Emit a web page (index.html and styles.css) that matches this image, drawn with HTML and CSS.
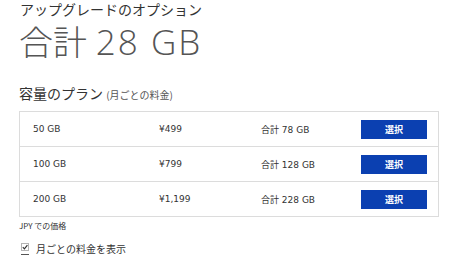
FILE: index.html
```html
<!DOCTYPE html>
<html lang="ja">
<head>
<meta charset="utf-8">
<link rel="stylesheet" href="styles.css">
</head>
<body>
<div class="page">
  <div class="title">アップグレードのオプション</div>
  <div class="total">合計 <span class="amount">28 GB</span></div>
  <div class="subtitle">容量のプラン <span class="note">(月ごとの料金)</span></div>
  <div class="plans">
    <div class="row">
      <span>50 GB</span><span>¥499</span><span>合計 78 GB</span><button class="btn">選択</button>
    </div>
    <div class="row">
      <span>100 GB</span><span>¥799</span><span>合計 128 GB</span><button class="btn">選択</button>
    </div>
    <div class="row">
      <span>200 GB</span><span>¥1,199</span><span>合計 228 GB</span><button class="btn">選択</button>
    </div>
  </div>
  <div class="currency">JPY での価格</div>
  <label class="check">
    <svg class="box" width="9" height="14" viewBox="0 0 9 14">
      <rect x="0.5" y="0.5" width="7" height="7" fill="#fff" stroke="#b5b5b5"/>
      <path d="M1.8 4.2 L3.4 5.8 L6.4 2.2" fill="none" stroke="#333" stroke-width="1.2"/>
      <line x1="0" y1="11.5" x2="8" y2="11.5" stroke="#555" stroke-width="1"/>
    </svg>
    <span>月ごとの料金を表示</span>
  </label>
</div>
</body>
</html>
```
FILE: styles.css
```css
html, body {
  margin: 0;
  padding: 0;
  background: #fff;
}
.page {
  padding-left: 19px;
  width: 420px;
  font-family: "Noto Sans CJK JP", sans-serif;
  color: #333;
}
.title {
  font-size: 14px;
  line-height: 18px;
  height: 18px;
  padding-left: 1px;
  color: #333;
}
.total {
  margin-top: 4px;
  font-family: "Open Sans", "Noto Sans CJK JP", sans-serif;
  font-weight: 300;
  font-size: 34px;
  line-height: 40px;
  height: 40px;
  color: #555;
  white-space: nowrap;
}
.amount {
  font-size: 35px;
  letter-spacing: 2px;
}
.subtitle {
  margin-top: 21px;
  font-size: 14px;
  line-height: 20px;
  height: 20px;
  color: #333;
}
.note {
  font-size: 10px;
  color: #555;
}
.plans {
  margin-top: 8px;
  border: 1px solid #dcdcdc;
}
.row {
  display: grid;
  grid-template-columns: 126px 102px 100px 66px;
  align-items: center;
  height: 34px;
  padding: 0 12px 0 13px;
  font-family: "DejaVu Sans", "Noto Sans CJK JP", sans-serif;
  font-size: 9px;
  color: #333;
}
.row + .row {
  border-top: 1px solid #dcdcdc;
}
.btn {
  width: 66px;
  height: 19px;
  margin: 0;
  padding: 0;
  border: 0;
  background: #0b40b1;
  color: #fff;
  font-family: "Noto Sans CJK JP", sans-serif;
  font-size: 9px;
  font-weight: 700;
  line-height: 19px;
}
.currency {
  margin-top: 3px;
  font-size: 8px;
  line-height: 12px;
  height: 12px;
  color: #333;
}
.check {
  margin-top: 9px;
  display: flex;
  align-items: center;
  gap: 6px;
  height: 14px;
  padding-left: 2px;
  font-size: 10px;
  color: #333;
}
.box {
  display: block;
  margin-top: 3px;
}
```
